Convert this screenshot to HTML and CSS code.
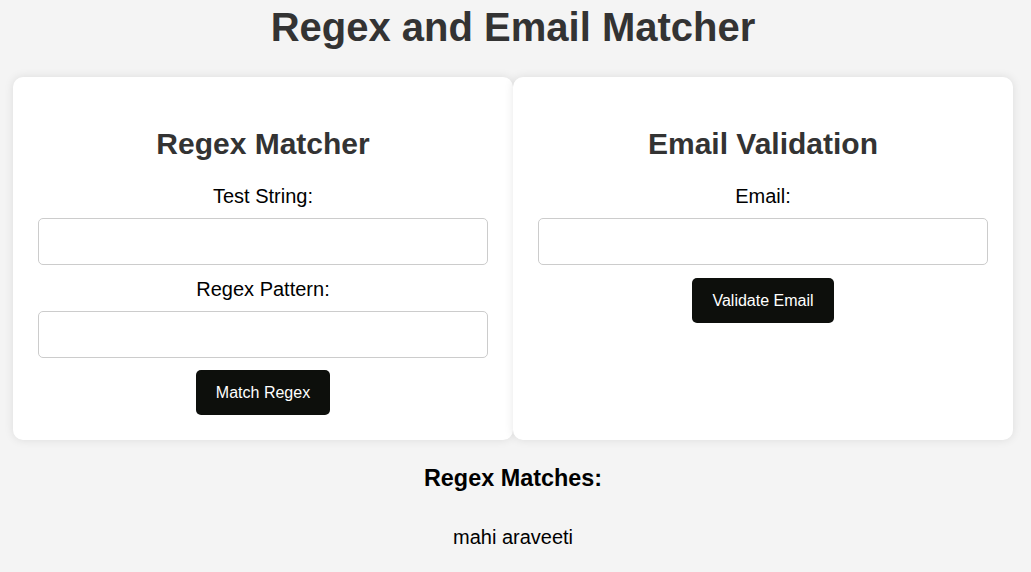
FILE: index.html
```html
<!DOCTYPE html>
<html>
<head>
<meta charset="utf-8">
<title>Regex and Email Matcher</title>
<link rel="stylesheet" href="styles.css">
</head>
<body>
<h1 class="title">Regex and Email Matcher</h1>
<div class="cards">
  <div class="card">
    <h2 class="card-title">Regex Matcher</h2>
    <label class="field-label">Test String:</label>
    <input class="field-input" type="text">
    <label class="field-label">Regex Pattern:</label>
    <input class="field-input" type="text">
    <button class="btn">Match Regex</button>
  </div>
  <div class="card">
    <h2 class="card-title">Email Validation</h2>
    <label class="field-label">Email:</label>
    <input class="field-input" type="text">
    <button class="btn btn-email">Validate Email</button>
  </div>
</div>
<div class="results">
  <h3 class="results-title">Regex Matches:</h3>
  <p class="result-item">mahi araveeti</p>
</div>
</body>
</html>
```
FILE: styles.css
```css
html, body {
  margin: 0;
  padding: 0;
}
body {
  background: #f4f4f4;
  font-family: "Liberation Sans", Arial, sans-serif;
  font-size: 20px;
  color: #000;
  text-align: center;
  padding-right: 5px;
}
.title {
  font-size: 40px;
  font-weight: bold;
  color: #333;
  margin: 5px 0 27px;
}
.cards {
  display: flex;
  margin: 0 13px;
}
.card {
  flex: 1;
  background: #fff;
  border-radius: 10px;
  box-shadow: 0 0 10px rgba(0, 0, 0, 0.1);
  padding: 25px;
  display: flex;
  flex-direction: column;
  align-items: center;
}
.card-title {
  font-size: 30px;
  color: #333;
  margin: 25px 0 24px;
  line-height: 34px;
}
.field-label {
  display: block;
  font-size: 20px;
  line-height: 23px;
  color: #000;
}
.field-input {
  box-sizing: border-box;
  width: 100%;
  height: 47px;
  margin: 10px 0 12px;
  border: 1px solid #ccc;
  border-radius: 5px;
  font-family: inherit;
  font-size: 16px;
  padding: 0 10px;
  background: #fff;
}
.field-input + .field-label {
  margin-top: 1px;
}
.btn {
  background: #0d0f0c;
  color: #fff;
  border: none;
  border-radius: 5px;
  font-family: "Liberation Sans", Arial, sans-serif;
  font-size: 16px;
  line-height: 19px;
  padding: 13px 20px;
  margin-top: 0;
  cursor: pointer;
}
.btn-email {
  margin-top: 1px;
}
.results {
  margin-top: 25px;
}
.results-title {
  font-size: 23.4px;
  font-weight: bold;
  margin: 0;
  line-height: 27px;
}
.result-item {
  margin: 34px 0 0;
  line-height: 23px;
}
```
